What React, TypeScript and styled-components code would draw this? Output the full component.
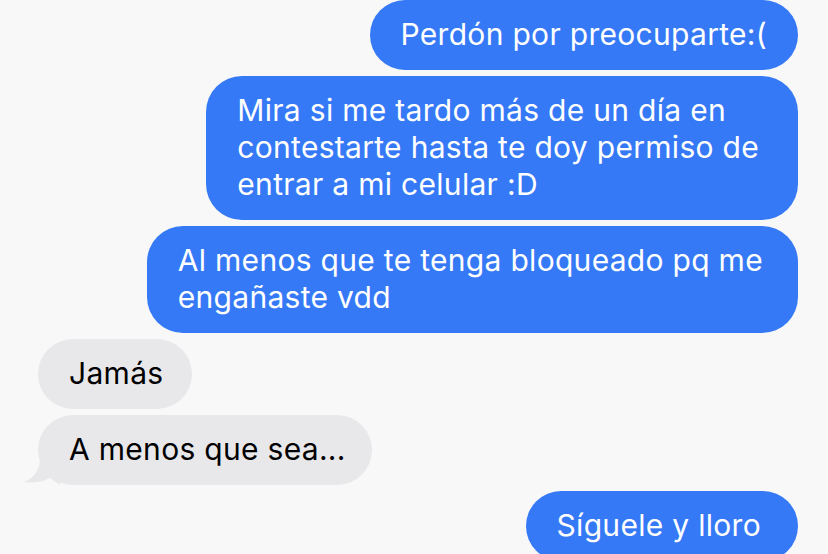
import React from "react";
import styled, { createGlobalStyle } from "styled-components";

const Global = createGlobalStyle`
  html, body {
    margin: 0;
    padding: 0;
    background: #f8f8f8;
  }
  body {
    font-family: Inter, "Noto Sans", "Liberation Sans", sans-serif;
    -webkit-font-smoothing: antialiased;
  }
`;

const Thread = styled.div`
  width: 828px;
  height: 554px;
  overflow: hidden;
  box-sizing: border-box;
  padding: 0 30px 0 38px;
  display: flex;
  flex-direction: column;
  gap: 6px;
  background: #f8f8f8;
`;

const Row = styled.div<{ $out?: boolean }>`
  display: flex;
  justify-content: ${(p) => (p.$out ? "flex-end" : "flex-start")};
`;

const Bubble = styled.div<{ $out?: boolean; $padR?: number }>`
  position: relative;
  box-sizing: border-box;
  padding: 16px ${(p) => p.$padR ?? 31}px 17px 31px;
  border-radius: 36px;
  font-size: 30px;
  line-height: 37px;
  letter-spacing: 0.3px;
  white-space: nowrap;
  color: ${(p) => (p.$out ? "#ffffff" : "#000000")};
  background: ${(p) => (p.$out ? "#3579f6" : "#e8e8eb")};
`;

const Tail = styled.svg`
  position: absolute;
  left: -18px;
  bottom: 0;
  width: 40px;
  height: 30px;
  z-index: 0;
`;

const Text = styled.span`
  position: relative;
  z-index: 1;
`;

type Msg = { out: boolean; lines: string[]; tail?: boolean; padR?: number };

const messages: Msg[] = [
  { out: true, lines: ["Perdón por preocuparte:("], padR: 31 },
  {
    out: true,
    lines: [
      "Mira si me tardo más de un día en",
      "contestarte hasta te doy permiso de",
      "entrar a mi celular :D",
    ],
    padR: 39,
  },
  {
    out: true,
    lines: ["Al menos que te tenga bloqueado pq me", "engañaste vdd"],
    padR: 35,
  },
  { out: false, lines: ["Jamás"], padR: 29 },
  { out: false, lines: ["A menos que sea..."], tail: true, padR: 26 },
  { out: true, lines: ["Síguele y lloro"], padR: 37 },
];

export default function App() {
  return (
    <>
      <Global />
      <Thread>
        {messages.map((m, i) => (
          <Row key={i} $out={m.out}>
            <Bubble $out={m.out} $padR={m.padR}>
              {m.tail && (
                <Tail viewBox="0 0 40 30" aria-hidden="true">
                  <path
                    d="M20 0 Q21 20 4 27 Q18 29 30 23 L40 30 L40 0 Z"
                    fill="#e8e8eb"
                  />
                </Tail>
              )}
              <Text>
                {m.lines.map((l, j) => (
                  <React.Fragment key={j}>
                    {j > 0 && <br />}
                    {l}
                  </React.Fragment>
                ))}
              </Text>
            </Bubble>
          </Row>
        ))}
      </Thread>
    </>
  );
}
